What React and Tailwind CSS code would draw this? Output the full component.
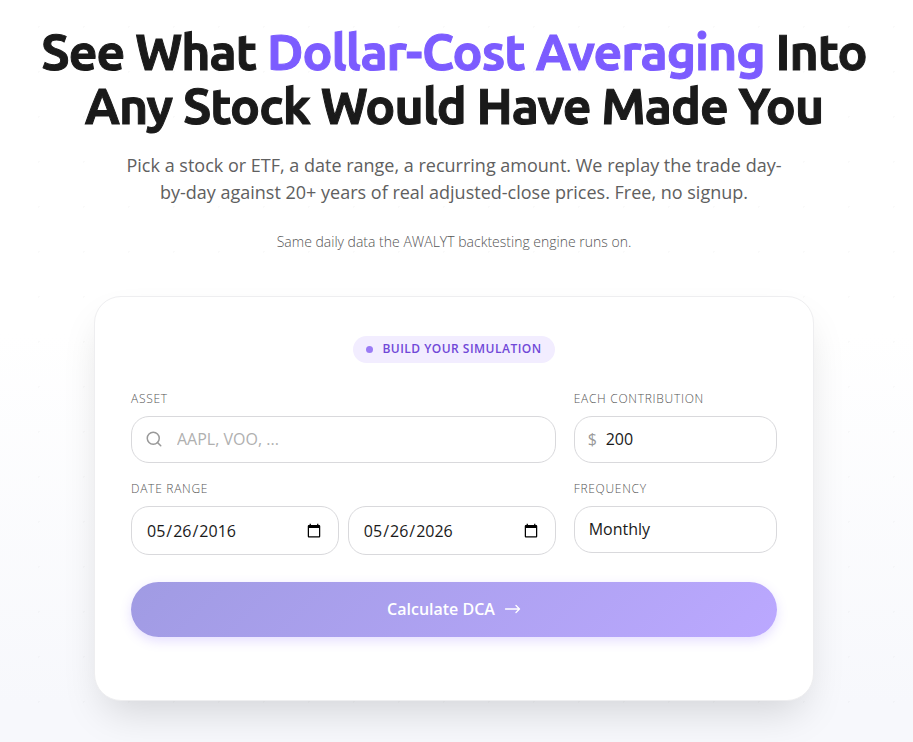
import { useState } from 'react'
import { Search } from 'lucide-react'

const FIELD = 'w-full rounded-[18px] border border-[#d9d9dc] bg-white text-base text-[#1a1a1a] outline-none focus:border-[#7c5cff]'
const LABEL = 'block text-xs leading-4 tracking-[0.06em] uppercase font-light text-[#555] mb-[9px]'

function DateField({ label, value, onChange }) {
  return (
    <input
      type="date"
      aria-label={label}
      value={value}
      onChange={(e) => onChange(e.target.value)}
      className={`${FIELD} flex-1 min-w-0 h-[49px] px-[14px]`}
    />
  )
}

export default function App() {
  const [asset, setAsset] = useState('')
  const [amount, setAmount] = useState('200')
  const [start, setStart] = useState('2016-05-26')
  const [end, setEnd] = useState('2026-05-26')
  const [frequency, setFrequency] = useState('Monthly')

  return (
    <div className="min-h-screen bg-[linear-gradient(to_bottom,#ffffff_45%,#f7f8fc_95%)] font-['Open_Sans','Noto_Sans',sans-serif]">
      <main className="min-h-screen bg-[radial-gradient(circle_at_center,rgba(0,0,0,0.02)_1px,transparent_1px)] bg-[size:45px_45px] bg-[position:16px_4px] pt-6 pb-10 pl-4 pr-[21px]">
        {/* Hero */}
        <header className="text-center">
          <h1 className="text-[50px] leading-[54px] font-bold tracking-[-0.02em] text-[#1a1a1a] font-['Ubuntu','Open_Sans',sans-serif] [-webkit-text-stroke:1px]">
            See What <span className="text-[#7c5cff]">Dollar-Cost Averaging</span> Into
            <br />
            Any Stock Would Have Made You
          </h1>
          <p className="max-w-[672px] mx-auto mt-5 text-lg leading-[27px] text-[#606060]">
            Pick a stock or ETF, a date range, a recurring amount. We replay the trade day-by-day against 20+ years of real adjusted-close prices. Free, no signup.
          </p>
          <p className="mt-[25px] text-sm leading-[21px] font-light text-[#555]">
            Same daily data the AWALYT backtesting engine runs on.
          </p>
        </header>

        {/* Simulation form */}
        <form
          onSubmit={(e) => e.preventDefault()}
          className="max-w-[720px] mx-auto mt-11 px-9 pt-[39px] pb-[63px] bg-white border border-[#eeeef0] rounded-[27px] shadow-[0_20px_40px_-10px_rgba(0,0,0,0.15)]"
        >
          <div className="flex justify-center">
            <div className="flex items-center gap-[9px] h-[27px] px-[13px] rounded-full bg-[#f2edff] text-[#7048d8] text-xs font-semibold tracking-[0.04em] uppercase">
              <span className="w-[7px] h-[7px] rounded-full bg-[#9a7bf5]" />
              <span className="pb-0.5">Build your simulation</span>
            </div>
          </div>

          <div className="grid grid-cols-3 gap-[18px] mt-7">
            <div className="col-span-2">
              <label htmlFor="asset" className={LABEL}>Asset</label>
              <div className="relative">
                <Search className="absolute left-[14px] top-[14px] w-[18px] h-[18px] text-[#999]" strokeWidth={2} />
                <input
                  id="asset"
                  type="text"
                  placeholder="AAPL, VOO, ..."
                  value={asset}
                  onChange={(e) => setAsset(e.target.value)}
                  className={`${FIELD} h-[47px] pl-[45px] pr-4 pb-0.5 placeholder:text-[#b0b0b0]`}
                />
              </div>
            </div>

            <div>
              <label htmlFor="amount" className={LABEL}>Each contribution</label>
              <div className="relative">
                <span className="absolute left-[14px] top-[11px] text-base leading-6 text-[#999]">$</span>
                <input
                  id="amount"
                  type="text"
                  inputMode="decimal"
                  value={amount}
                  onChange={(e) => setAmount(e.target.value)}
                  className={`${FIELD} h-[47px] pl-[31px] pr-4 pb-0.5`}
                />
              </div>
            </div>

            <fieldset className="col-span-2">
              <legend className={LABEL}>Date range</legend>
              <div className="flex gap-[9px]">
                <DateField label="Start date" value={start} onChange={setStart} />
                <DateField label="End date" value={end} onChange={setEnd} />
              </div>
            </fieldset>

            <div>
              <label htmlFor="frequency" className={LABEL}>Frequency</label>
              <select
                id="frequency"
                value={frequency}
                onChange={(e) => setFrequency(e.target.value)}
                className={`${FIELD} appearance-none h-[47px] px-[14px] pb-0.5`}
              >
                <option>Weekly</option>
                <option>Monthly</option>
                <option>Quarterly</option>
              </select>
            </div>
          </div>

          <button
            type="submit"
            className="flex items-center justify-center gap-[9px] w-full h-[55px] pb-0.5 mt-[27px] rounded-full bg-[linear-gradient(135deg,#a09be3,#bba8ff)] text-white text-base font-semibold shadow-[0_4px_12px_rgba(124,92,255,0.2)]"
          >
            Calculate DCA
            <svg viewBox="0 0 17 10" className="w-[17px] h-2.5" fill="none" stroke="currentColor" strokeWidth="1.3" strokeLinecap="round" strokeLinejoin="round" aria-hidden="true">
              <path d="M1.5 5h14M12 1.5L15.5 5 12 8.5" />
            </svg>
          </button>
        </form>
      </main>
    </div>
  )
}
